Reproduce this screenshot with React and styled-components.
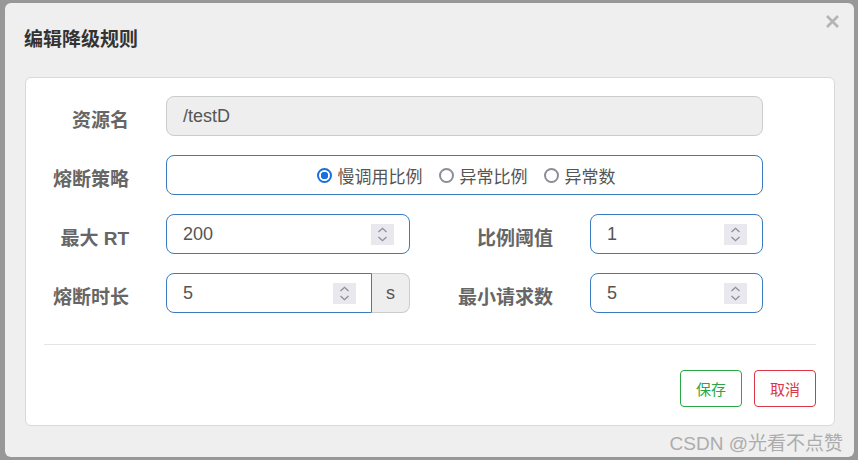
import React from "react"
import styled, { createGlobalStyle } from "styled-components"

const GlobalStyle = createGlobalStyle`
  html, body {
    margin: 0;
    padding: 0;
    background: #989898;
    font-family: "Liberation Sans", "Noto Sans CJK SC", sans-serif;
  }
`

const Backdrop = styled.div`
  width: 858px;
  height: 460px;
  padding: 3px 4px 0 5px;
  box-sizing: border-box;
  overflow: hidden;
`

const Modal = styled.div`
  width: 849px;
  height: 454px;
  background: #efefef;
  border-radius: 6px;
  display: flex;
  flex-direction: column;
`

const Header = styled.div`
  height: 74px;
  flex: none;
  display: flex;
  justify-content: space-between;
  align-items: center;
  padding: 0 15px 0 19px;
`

const Title = styled.h4`
  margin: 0;
  font-size: 19px;
  font-weight: 700;
  color: #333;
  padding-bottom: 6px;
`

const Close = styled.button`
  align-self: flex-start;
  margin-top: 12px;
  width: 13px;
  height: 13px;
  padding: 0;
  border: none;
  background: none;
  display: flex;
`

const Panel = styled.div`
  margin: 0 19px 0 20px;
  height: 349px;
  box-sizing: border-box;
  background: #fff;
  border: 1px solid #d9d9d9;
  border-radius: 6px;
  padding: 18px;
  display: flex;
  flex-direction: column;
`

const Form = styled.div`
  display: grid;
  grid-template-columns: 85px 244px 106px 173px;
  grid-auto-rows: 40px;
  column-gap: 37px;
  row-gap: 19px;
`

const Label = styled.label`
  justify-self: end;
  align-self: center;
  font-size: 19px;
  font-weight: 700;
  color: #666;
  white-space: nowrap;
  padding-top: 4px;
`

const Field = styled.div`
  grid-column: ${(p) => (p.$wide ? "2 / 5" : "auto")};
  display: flex;
  min-width: 0;
`

const Box = styled.div`
  flex: 1;
  min-width: 0;
  height: 40px;
  box-sizing: border-box;
  display: flex;
  align-items: center;
  padding: 0 15px 0 16px;
  border: 1px solid ${(p) => (p.$disabled ? "#ccc" : "#3b7bbf")};
  background: ${(p) => (p.$disabled ? "#eee" : "#fff")};
  border-radius: ${(p) => (p.$addon ? "8px 0 0 8px" : "8px")};
  font-size: 18px;
  color: #555;
`

const Value = styled.span`
  flex: 1;
`

const SpinBox = styled.span`
  width: 23px;
  height: 21px;
  background: #e8e8ee;
  display: flex;
`

const Addon = styled.span`
  width: 38px;
  height: 40px;
  box-sizing: border-box;
  border: 1px solid #ccc;
  border-left: none;
  border-radius: 0 8px 8px 0;
  background: #eee;
  display: flex;
  align-items: center;
  justify-content: center;
  font-size: 18px;
  color: #555;
`

const RadioGroup = styled.div`
  flex: 1;
  display: flex;
  justify-content: center;
  align-items: center;
  gap: 16px;
  padding-left: 2px;
`

const RadioItem = styled.span`
  display: flex;
  align-items: center;
  gap: 6px;
  font-size: 17px;
  color: #555;
`

const Dot = styled.span`
  width: 15px;
  height: 15px;
  box-sizing: border-box;
  border-radius: 50%;
  border: 2px solid ${(p) => (p.$on ? "#1a6fe0" : "#8d8d99")};
  background: ${(p) => (p.$on ? "radial-gradient(circle, #1a6fe0 0 3.5px, #fff 4px)" : "#fff")};
`

const Divider = styled.hr`
  margin: 31px 0 25px;
  border: none;
  border-top: 1px solid #e5e5e5;
  height: 0;
`

const Actions = styled.div`
  display: flex;
  justify-content: flex-end;
  gap: 12px;
`

const Button = styled.button`
  width: 62px;
  height: 37px;
  background: #fff;
  border: 1px solid ${(p) => p.$color};
  color: ${(p) => p.$color};
  border-radius: 4px;
  font-family: inherit;
  font-size: 15px;
  padding: 0;
`

const Footer = styled.div`
  flex: 1;
  display: flex;
  justify-content: flex-end;
  align-items: center;
  padding-right: 11px;
  font-size: 19px;
  color: #acacac;
`

const Spinner = () => (
  <SpinBox>
    <svg width="23" height="21" viewBox="0 0 23 21">
      <path d="M7.5 8 L11.5 4.3 L15.5 8" fill="none" stroke="#8e8e9c" strokeWidth="1.3" />
      <path d="M7.5 13 L11.5 16.7 L15.5 13" fill="none" stroke="#8e8e9c" strokeWidth="1.3" />
    </svg>
  </SpinBox>
)

const NumberField = ({ value, unit }) => (
  <Field>
    <Box $addon={!!unit}>
      <Value>{value}</Value>
      <Spinner />
    </Box>
    {unit && <Addon>{unit}</Addon>}
  </Field>
)

const strategies = [
  { label: "慢调用比例", on: true },
  { label: "异常比例" },
  { label: "异常数" },
]

export default function App() {
  return (
    <Backdrop>
      <GlobalStyle />
      <Modal>
        <Header>
          <Title>编辑降级规则</Title>
          <Close aria-label="close">
            <svg width="13" height="13" viewBox="0 0 13 13">
              <path d="M1 1 L12 12 M12 1 L1 12" stroke="#b4b4b4" strokeWidth="2.6" />
            </svg>
          </Close>
        </Header>
        <Panel>
          <Form>
            <Label>资源名</Label>
            <Field $wide>
              <Box $disabled>/testD</Box>
            </Field>

            <Label>熔断策略</Label>
            <Field $wide>
              <Box>
                <RadioGroup>
                  {strategies.map((s) => (
                    <RadioItem key={s.label}>
                      <Dot $on={s.on} />
                      {s.label}
                    </RadioItem>
                  ))}
                </RadioGroup>
              </Box>
            </Field>

            <Label>最大 RT</Label>
            <NumberField value="200" />
            <Label>比例阈值</Label>
            <NumberField value="1" />

            <Label>熔断时长</Label>
            <NumberField value="5" unit="s" />
            <Label>最小请求数</Label>
            <NumberField value="5" />
          </Form>
          <Divider />
          <Actions>
            <Button $color="#28a745">保存</Button>
            <Button $color="#dc3545">取消</Button>
          </Actions>
        </Panel>
        <Footer>CSDN @光看不点赞</Footer>
      </Modal>
    </Backdrop>
  )
}
